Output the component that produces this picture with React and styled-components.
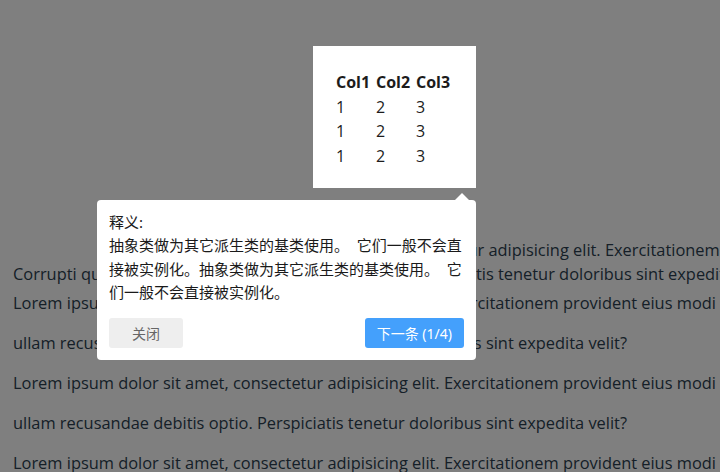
import React from "react";
import styled, { createGlobalStyle } from "styled-components";

const GlobalStyle = createGlobalStyle`
  html, body {
    margin: 0;
    padding: 0;
    background: #fff;
  }
  body {
    font-family: "Open Sans", "Noto Sans", sans-serif;
    overflow: hidden;
  }
`;

const Page = styled.div`
  position: relative;
  width: 720px;
  height: 472px;
  overflow: hidden;
  color: #2c3e50;
`;

const Stage = styled.div`
  padding: 46px 0 0 313px;
`;

const Highlight = styled.div`
  position: relative;
  z-index: 20;
  width: 163px;
  height: 142px;
  box-sizing: border-box;
  padding: 23px 20px 0;
  background: #fff;
`;

const Grid = styled.table`
  border-spacing: 2px;
  font-size: 16px;
  color: #1c1c1c;
`;

const Cell = styled.td`
  width: 36px;
  padding: 1px;
  line-height: 20.7px;
  text-align: left;
  font-weight: ${p => (p.$head ? 700 : 400)};
  white-space: nowrap;
`;

const Article = styled.div`
  margin-top: 50px;
  padding-left: 13px;
  font-size: 16.4px;
`;

const Block = styled.div`
  line-height: ${p => p.$lh}px;
  margin-top: ${p => p.$shift || 0}px;
`;

const Line = styled.div`
  white-space: nowrap;
  padding-left: ${p => p.$indent || 0}px;
`;

const Overlay = styled.div`
  position: fixed;
  inset: 0;
  z-index: 10;
  background: rgba(0, 0, 0, 0.5);
`;

const Popover = styled.div`
  position: absolute;
  top: calc(100% + 12px);
  right: 0;
  width: 379px;
  box-sizing: border-box;
  padding: 11px 12px 12px;
  background: #fff;
  border-radius: 4px;
  color: #1a1a1a;
  font-family: "Noto Sans", "Noto Sans CJK SC", sans-serif;
  font-size: 15px;
  line-height: 23.3px;

  &::before {
    content: "";
    position: absolute;
    top: -7px;
    right: 7px;
    border-left: 7px solid transparent;
    border-right: 7px solid transparent;
    border-bottom: 7px solid #fff;
  }
`;

const Title = styled.div``;

const Description = styled.div``;

const Footer = styled.div`
  display: flex;
  justify-content: space-between;
  margin-top: 14px;
`;

const Button = styled.button`
  height: 30px;
  padding: 0 ${p => (p.$primary ? 12 : 23)}px;
  border: none;
  border-radius: 3px;
  font-family: "Noto Sans", "Noto Sans CJK SC", sans-serif;
  font-size: 14px;
  background: ${p => (p.$primary ? "#44a0fc" : "#eeeeee")};
  color: ${p => (p.$primary ? "#fff" : "#666")};
  cursor: pointer;
`;

const rows = [
  [1, 2, 3],
  [1, 2, 3],
  [1, 2, 3],
];

const LOREM =
  "Lorem ipsum dolor sit amet, consectetur adipisicing elit. Exercitationem provident eius modi";
const ULLAM =
  "ullam recusandae debitis optio. Perspiciatis tenetur doloribus sint expedita velit?";

export default function App() {
  return (
    <>
      <GlobalStyle />
      <Page>
        <Stage>
          <Highlight>
            <Grid>
              <thead>
                <tr>
                  <Cell as="th" $head>Col1</Cell>
                  <Cell as="th" $head>Col2</Cell>
                  <Cell as="th" $head>Col3</Cell>
                </tr>
              </thead>
              <tbody>
                {rows.map((r, i) => (
                  <tr key={i}>
                    {r.map((v, j) => (
                      <Cell key={j}>{v}</Cell>
                    ))}
                  </tr>
                ))}
              </tbody>
            </Grid>
            <Popover>
              <Title>释义:</Title>
              <Description>
                抽象类做为其它派生类的基类使用。{"\u00a0 "}它们一般不会直接被实例化。抽象类做为其它派生类的基类使用。{"\u00a0 "}它们一般不会直接被实例化。
              </Description>
              <Footer>
                <Button>关闭</Button>
                <Button $primary>下一条 (1/4)</Button>
              </Footer>
            </Popover>
          </Highlight>
        </Stage>
        <Article>
          <Block $lh={24}>
            <Line $indent={161}>{LOREM}</Line>
            <Line>Corrupti quidem et ullam recusandae debitis optio. Perspiciatis tenetur doloribus sint expedita velit?</Line>
          </Block>
          <Block $lh={40} $shift={-3}>
            <Line>{LOREM}</Line>
            <Line>{ULLAM}</Line>
            <Line>{LOREM}</Line>
            <Line>{ULLAM}</Line>
            <Line>{LOREM}</Line>
          </Block>
        </Article>
        <Overlay />
      </Page>
    </>
  );
}
